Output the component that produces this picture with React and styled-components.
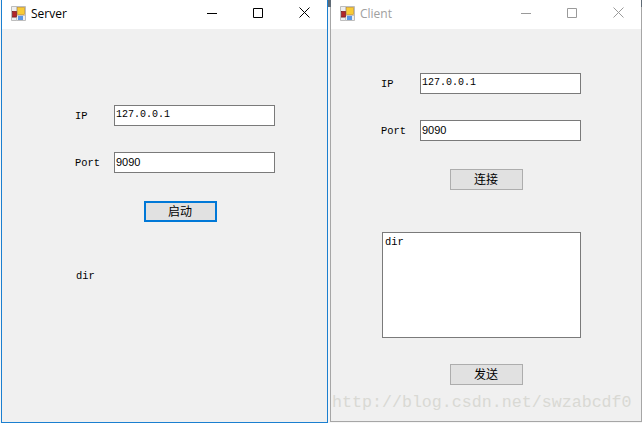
import React from 'react';
import styled, { createGlobalStyle } from 'styled-components';

const Global = createGlobalStyle`
  html, body { margin: 0; padding: 0; background: #fff; overflow: hidden; }
  #root { width: 642px; height: 423px; }
`;

const Desktop = styled.div`
  position: relative;
  width: 642px;
  height: 423px;
  display: flex;
  align-items: flex-start;
  padding-left: 1px;
  gap: 2px;
  box-sizing: border-box;
  overflow: hidden;
  background: #f6f6f6;
`;

const Win = styled.section`
  box-sizing: border-box;
  width: ${p => p.$w}px;
  height: ${p => p.$h}px;
  display: flex;
  flex-direction: column;
  background: #f0f0f0;
  border: 1px solid ${p => (p.$active ? '#1b7fd0' : '#a6a6a6')};
  border-top: 0;
`;

const TitleBar = styled.header`
  height: 29px;
  flex: none;
  background: #fff;
  display: flex;
  align-items: center;
  padding-left: 9px;
`;

const IconSlot = styled.span`
  display: flex;
  position: relative;
  top: -1px;
`;

const TitleText = styled.span`
  font: 12px "Open Sans", "Noto Sans", sans-serif;
  color: ${p => (p.$active ? '#000' : '#a0a0a0')};
  margin-left: 5px;
  flex: 1;
  position: relative;
  top: -1px;
`;

const Ctrl = styled.button`
  border: 0;
  background: none;
  padding: 0;
  width: 46px;
  height: 29px;
  display: flex;
  align-items: center;
  justify-content: center;
  color: ${p => (p.$active ? '#000' : '#9a9a9a')};
  position: relative;
  top: -2px;
`;

const Content = styled.div`
  flex: 1;
  display: flex;
  flex-direction: column;
  align-items: flex-start;
  padding-left: ${p => p.$left}px;
  padding-top: ${p => p.$top}px;
`;

const Field = styled.div`
  display: flex;
  align-items: center;
  height: 21px;
  margin-top: ${p => p.$mt || 0}px;
`;

const Label = styled.span`
  width: 39px;
  font: 10.4px/14px "Liberation Mono", monospace;
  color: #000;
`;

const Input = styled.div`
  box-sizing: border-box;
  width: 161px;
  height: 21px;
  background: #fff;
  border: 1px solid #7a7a7a;
  padding-left: 1px;
  color: #000;
  font: ${p => (p.$mono ? '10px/18px "Liberation Mono", monospace' : '11px/18px "Liberation Sans", sans-serif')};
  white-space: pre;
`;

const Btn = styled.button`
  box-sizing: border-box;
  width: 73px;
  height: 21px;
  margin-top: ${p => p.$mt}px;
  margin-left: ${p => p.$ml}px;
  background: #e1e1e1;
  border: ${p => (p.$focus ? '2px solid #0078d7' : '1px solid #adadad')};
  padding: 0 1px 2px 0;
  color: #000;
  font: 12px/15px "Noto Sans CJK SC", sans-serif;
`;

const Output = styled.div`
  margin-top: 47px;
  margin-left: 1px;
  font: 10.4px/14px "Liberation Mono", monospace;
  color: #000;
`;

const Log = styled.div`
  box-sizing: border-box;
  width: 199px;
  height: 106px;
  margin-top: 42px;
  margin-left: 1px;
  background: #fff;
  border: 1px solid #7a7a7a;
  padding: 2px 2px;
  font: 10.4px/14px "Liberation Mono", monospace;
  color: #000;
`;

const Watermark = styled.div`
  position: absolute;
  left: 332px;
  top: 391px;
  font: 16.65px/24px "Liberation Mono", monospace;
  color: #d9d9d4;
  white-space: nowrap;
  pointer-events: none;
`;

const Stub = styled.i`
  position: absolute;
  left: ${p => p.$x}px;
  top: 0;
  width: ${p => p.$w}px;
  height: 7px;
  background: #5f6a75;
`;

const AppIcon = () => (
  <svg width="15" height="15" viewBox="0 0 15 15">
    <path d="M.5.5h14v14H.5z" fill="#efefef" stroke="#bdbdbd" />
    <path d="M1 5.5h5M1 11.5h5M5.5 1v14M6 9.5h8" stroke="#c4c4c4" fill="none" />
    <rect x="6.5" y="1.5" width="7" height="7" fill="#f8cb35" stroke="#c9962a" strokeWidth=".7" />
    <rect x="1.5" y="5.5" width="4" height="5.5" fill="#b3262a" stroke="#7d1a1d" strokeWidth=".7" />
    <rect x="7" y="10" width="5" height="4" fill="#5b97e4" />
  </svg>
);

const Minimize = () => (
  <svg width="10" height="10" viewBox="0 0 10 10"><path d="M0 5.5h10" stroke="currentColor" fill="none" /></svg>
);
const Maximize = () => (
  <svg width="10" height="10" viewBox="0 0 10 10"><path d="M.5.5h9v9h-9z" stroke="currentColor" fill="none" /></svg>
);
const CloseGlyph = () => (
  <svg width="11" height="11" viewBox="0 0 11 11"><path d="M.5.5l10 10M10.5.5l-10 10" stroke="currentColor" fill="none" /></svg>
);

const Title = ({ name, active }) => (
  <TitleBar>
    <IconSlot><AppIcon /></IconSlot>
    <TitleText $active={active}>{name}</TitleText>
    <Ctrl $active={active}><Minimize /></Ctrl>
    <Ctrl $active={active}><Maximize /></Ctrl>
    <Ctrl $active={active}><CloseGlyph /></Ctrl>
  </TitleBar>
);

export default function App() {
  return (
    <Desktop>
      <Global />
      <Win $w={327} $h={423} $active>
        <Title name="Server" active />
        <Content $left={73} $top={76}>
          <Field><Label>IP</Label><Input $mono>127.0.0.1</Input></Field>
          <Field $mt={26}><Label>Port</Label><Input>9090</Input></Field>
          <Btn $mt={28} $ml={69} $focus>启动</Btn>
          <Output>dir</Output>
        </Content>
      </Win>
      <Win $w={312} $h={422}>
        <Title name="Client" />
        <Content $left={50} $top={44}>
          <Field><Label>IP</Label><Input $mono>127.0.0.1</Input></Field>
          <Field $mt={26}><Label>Port</Label><Input>9090</Input></Field>
          <Btn $mt={28} $ml={69}>连接</Btn>
          <Log>dir</Log>
          <Btn $mt={26} $ml={69}>发送</Btn>
        </Content>
      </Win>
      <Stub $x={328} $w={3} />
      <Stub $x={641} $w={1} />
      <Watermark>http://blog.csdn.net/swzabcdf0</Watermark>
    </Desktop>
  );
}
